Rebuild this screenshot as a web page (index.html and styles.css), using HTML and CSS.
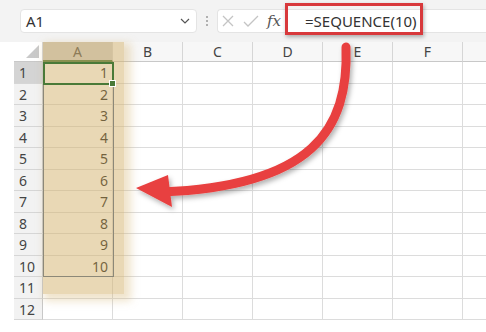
FILE: index.html
```html
<!DOCTYPE html>
<html lang="en">
<head>
  <meta charset="UTF-8" />
  <title>SEQUENCE spill</title>
  <link rel="stylesheet" href="styles.css">
</head>
<body>
  <div class="page">
    <div class="toolbar">
      <div class="name-box">
        <span>A1</span>
        <svg class="chevron" width="10" height="6" viewBox="0 0 10 6"><path d="M1 1 L5 5 L9 1" fill="none" stroke="#555" stroke-width="1.2"/></svg>
      </div>
      <div class="dots"><i></i><i></i><i></i></div>
      <div class="formula-box">
        <svg class="ico" width="14" height="14" viewBox="0 0 14 14"><path d="M2 2 L12 12 M12 2 L2 12" stroke="#c4c4c4" stroke-width="1.3"/></svg>
        <svg class="ico" width="16" height="14" viewBox="0 0 16 14"><path d="M1 8 L5 12 L15 2" fill="none" stroke="#c4c4c4" stroke-width="1.3"/></svg>
        <span class="fx">fx</span>
        <span class="formula">=SEQUENCE(10)</span>
      </div>
      <div class="callout"></div>
    </div>

    <div class="sheet">
      <div class="grid">
        <div class="corner"><span></span></div>
        <div class="col-head active">A</div>
        <div class="col-head">B</div>
        <div class="col-head">C</div>
        <div class="col-head">D</div>
        <div class="col-head">E</div>
        <div class="col-head">F</div>
        <div class="col-head"></div>
      </div>
      <div class="grid rows" id="rows"></div>

      <div class="tint"></div>
      <div class="spill"></div>
      <div class="selected"><span class="handle"></span></div>
    </div>

    <svg class="arrow" width="486" height="332" viewBox="0 0 486 332">
      <defs>
        <filter id="shade" x="-20%" y="-20%" width="140%" height="140%">
          <feDropShadow dx="2" dy="3" stdDeviation="2.5" flood-color="#000" flood-opacity="0.3"/>
        </filter>
      </defs>
      <g filter="url(#shade)" fill="#e8403f">
        <path d="M346 47 C349 130 312 186 162 192" fill="none" stroke="#e8403f" stroke-width="9" stroke-linecap="round"/>
        <polygon points="136,188 168,175 172,207"/>
      </g>
    </svg>
  </div>

  <script>
    // fill rows 1..12, column A holds the spilled sequence
    const rows = document.getElementById("rows");
    for (let r = 1; r <= 12; r++) {
      const head = document.createElement("div");
      head.className = "row-head" + (r === 1 ? " active" : "");
      head.textContent = r;
      rows.appendChild(head);
      for (let c = 0; c < 7; c++) {
        const cell = document.createElement("div");
        cell.className = "cell";
        if (c === 0 && r <= 10) cell.textContent = r;
        rows.appendChild(cell);
      }
    }
  </script>
</body>
</html>
```

FILE: styles.css
```css
body {
  margin: 0;
  background: #ffffff;
  font-family: 'Noto Sans', 'Open Sans', sans-serif;
  color: #333;
}
.page {
  position: relative;
  width: 486px;
  height: 332px;
  overflow: hidden;
}
.toolbar {
  position: relative;
  height: 42px;
  background: #f3f3f3;
  display: flex;
  align-items: flex-start;
  padding: 9px 0 0 20px;
  box-sizing: border-box;
}
.name-box {
  width: 177px;
  height: 24px;
  box-sizing: border-box;
  background: #fff;
  border: 1px solid #e4e4e4;
  border-radius: 4px;
  display: flex;
  align-items: center;
  justify-content: space-between;
  padding: 0 6px 0 5px;
  font-size: 15px;
  color: #333;
}
.dots {
  width: 20px;
  height: 24px;
  display: flex;
  flex-direction: column;
  align-items: center;
  justify-content: center;
  gap: 2px;
}
.dots i {
  width: 2px;
  height: 2px;
  background: #9a9a9a;
  border-radius: 50%;
}
.formula-box {
  flex: 1;
  height: 24px;
  box-sizing: border-box;
  background: #fff;
  border: 1px solid #e4e4e4;
  border-right: none;
  border-radius: 4px 0 0 4px;
  display: flex;
  align-items: center;
  padding-left: 3px;
  gap: 8px;
}
.fx {
  font-family: 'DejaVu Serif', 'Liberation Serif', serif;
  font-style: italic;
  font-size: 15px;
  color: #555;
  margin-left: 0;
}
.formula {
  margin-left: 16px;
  font-size: 15px;
  color: #333;
}
.callout {
  position: absolute;
  left: 285px;
  top: 3px;
  width: 138px;
  height: 32px;
  box-sizing: border-box;
  border: 3px solid #d8393c;
  box-shadow: 1px 2px 4px rgba(0, 0, 0, 0.3);
}
.sheet {
  position: relative;
  margin-left: 14px;
}
.grid {
  display: grid;
  grid-template-columns: 29px repeat(7, 70px);
}
.rows {
  grid-auto-rows: 21.5px;
}
.corner,
.col-head {
  height: 20px;
  box-sizing: border-box;
  border-right: 1px solid #d6d6d6;
  border-bottom: 1px solid #c8c8c8;
  background: #f7f7f7;
  font-size: 14px;
  text-align: center;
  line-height: 19px;
  color: #444;
}
.corner {
  position: relative;
  background: #fff;
}
.corner span {
  position: absolute;
  right: 3px;
  bottom: 3px;
  width: 0;
  height: 0;
  border-left: 13px solid transparent;
  border-bottom: 13px solid #c9c9c9;
}
.col-head.active {
  background: #d0d0d0;
  border-bottom: 2px solid #3e7034;
}
.row-head {
  box-sizing: border-box;
  background: #f2f2f2;
  border-right: 1px solid #c8c8c8;
  border-bottom: 1px solid #d6d6d6;
  font-size: 14px;
  padding-left: 5px;
  line-height: 21px;
  color: #444;
}
.row-head.active {
  background: #d4d4d4;
}
.cell {
  box-sizing: border-box;
  border-right: 1px solid #dcdcdc;
  border-bottom: 1px solid #dcdcdc;
  font-size: 14px;
  text-align: right;
  padding-right: 4px;
  line-height: 21px;
  color: #111;
}
.tint {
  position: absolute;
  left: 29px;
  top: 0;
  width: 81px;
  height: 252px;
  background: rgba(212, 178, 108, 0.5);
  box-shadow: 4px 4px 8px 3px rgba(212, 178, 108, 0.35);
}
.spill {
  position: absolute;
  left: 29px;
  top: 20px;
  width: 71px;
  height: 215px;
  box-sizing: border-box;
  border: 1px solid #8c8878;
}
.selected {
  position: absolute;
  left: 29px;
  top: 20px;
  width: 71px;
  height: 23px;
  box-sizing: border-box;
  border: 2px solid #4a7a38;
}
.handle {
  position: absolute;
  right: -4px;
  bottom: -4px;
  width: 5px;
  height: 5px;
  background: #4a7a38;
  border: 1px solid #fff;
}
.arrow {
  position: absolute;
  left: 0;
  top: 0;
  pointer-events: none;
}
```
